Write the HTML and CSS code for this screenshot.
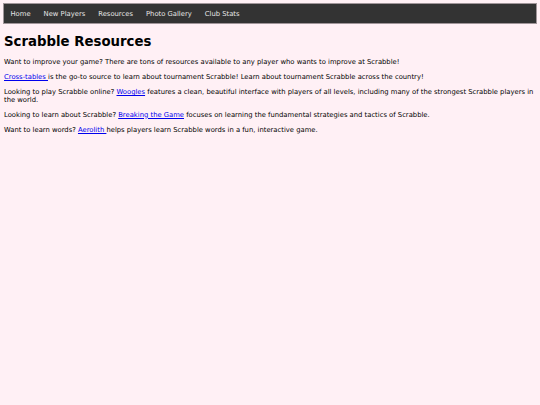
FILE: index.html
```html
<!DOCTYPE html>
<html>
<head>
<meta charset="utf-8">
<link rel="stylesheet" href="styles.css">
</head>
<body>
<nav class="topnav">
  <a class="navlink" href="#">Home</a>
  <a class="navlink" href="#">New Players</a>
  <a class="navlink" href="#">Resources</a>
  <a class="navlink" href="#">Photo Gallery</a>
  <a class="navlink" href="#">Club Stats</a>
</nav>
<main class="content">
  <h1 class="title">Scrabble Resources</h1>
  <p>Want to improve your game? There are tons of resources available to any player who wants to improve at Scrabble!</p>
  <p><a href="#">Cross-tables </a>is the go-to source to learn about tournament Scrabble! Learn about tournament Scrabble across the country!</p>
  <p>Looking to play Scrabble online? <a href="#">Woogles</a> features a clean, beautiful interface with players of all levels, including many of the strongest Scrabble players in the world.</p>
  <p>Looking to learn about Scrabble? <a href="#">Breaking the Game</a> focuses on learning the fundamental strategies and tactics of Scrabble.</p>
  <p>Want to learn words? <a href="#">Aerolith </a>helps players learn Scrabble words in a fun, interactive game.</p>
</main>
</body>
</html>
```
FILE: styles.css
```css
html, body {
  margin: 0;
  padding: 0;
}
body {
  background: #fff0f5;
  font-family: "DejaVu Sans", Verdana, sans-serif;
  font-size: 6.8px;
  color: #000;
  padding: 3px;
}
.topnav {
  display: flex;
  background: #333;
  border: 1px solid #a09599;
  height: 19px;
  align-items: center;
}
.topnav .navlink {
  color: #e6e6e6;
  text-decoration: none;
  padding: 0 6.5px;
  line-height: 8px;
}
.content {
  padding: 0 1px;
}
.title {
  font-size: 13.3px;
  margin: 10px 0 10px;
}
.content p {
  margin: 0 0 7.4px;
  line-height: 7.6px;
}
.content a {
  color: #0000ee;
}
```
